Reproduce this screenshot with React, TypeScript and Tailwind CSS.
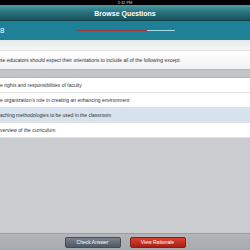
import React from 'react';

// Visible answer options (the row is cropped at the left edge)
const OPTIONS = [
    { id: 'a', label: 'e rights and responsibilities of faculty', selected: false },
    { id: 'b', label: 'e organization’s role in creating an enhancing environment', selected: false },
    { id: 'c', label: 'aching methodologies to be used in the classroom', selected: true },
    { id: 'd', label: 'verview of the curriculum', selected: false },
];

const App: React.FC = () => {
    return (
        <div className="w-[250px] h-[250px] overflow-hidden flex flex-col bg-[#c9cbcf] font-['Liberation_Sans',Arial,sans-serif]">
            {/* Status bar */}
            <div className="h-[5px] bg-black flex items-center justify-center">
                <span className="text-[4px] leading-none text-[#d0d0d0]">3:32 PM</span>
            </div>

            {/* Title bar */}
            <div className="h-[16px] pt-[2px] bg-gradient-to-b from-[#4b9ba7] via-[#27707a] to-[#1a525b] flex items-center justify-center border-b border-[#103c43]">
                <span className="text-[7px] font-bold text-white leading-none">Browse Questions</span>
            </div>

            {/* Question counter + progress */}
            <div className="h-[19px] bg-[#1f8197] flex items-center">
                <span className="text-[8px] text-white leading-none w-[77px]">8</span>
                <div className="flex h-[1px] w-[98px]">
                    <div className="w-[70px] bg-[#a2383c]" />
                    <div className="flex-1 bg-[#a8dbe8]" />
                </div>
            </div>

            {/* Spacer strip */}
            <div className="h-[11px] bg-gradient-to-b from-[#e4e6e8] to-[#f7f7f7] border-b border-[#e0e0e0]" />

            {/* Question */}
            <div className="h-[18px] bg-gradient-to-b from-white to-[#f2f2f2] flex items-center">
                <p className="text-[5px] text-[#333] leading-none whitespace-nowrap">
                    se educators should expect their orientations to include all of the following except:
                </p>
            </div>

            {/* Separator */}
            <div className="h-[9px] bg-[#c3c4c8] border-y border-[#b3b5b9]" />

            {/* Options */}
            <div className="flex flex-col">
                {OPTIONS.map((option) => (
                    <div
                        key={option.id}
                        className={`h-[15px] flex items-center border-b border-[#e2e2e2] ${option.selected ? 'bg-[#d6e2ed]' : 'bg-white'}`}
                    >
                        <span className="text-[5px] text-[#333] leading-none whitespace-nowrap">{option.label}</span>
                    </div>
                ))}
            </div>

            {/* Empty area */}
            <div className="flex-1 bg-[#cacccf]" />

            {/* Bottom toolbar */}
            <div className="h-[17px] bg-gradient-to-b from-[#b3b5b9] to-[#a6a9ad] border-t border-[#9c9fa3] flex items-center justify-center gap-[9px]">
                <button className="w-[56px] h-[11px] rounded-[2px] bg-gradient-to-b from-[#7a828d] to-[#505863] border border-[#464c55] text-[5px] text-white leading-none">
                    Check Answer
                </button>
                <button className="w-[56px] h-[11px] rounded-[2px] bg-gradient-to-b from-[#d8432f] to-[#a91e16] border border-[#8e1a13] text-[5px] text-white leading-none">
                    View Rationale
                </button>
            </div>
        </div>
    );
};

export default App;
